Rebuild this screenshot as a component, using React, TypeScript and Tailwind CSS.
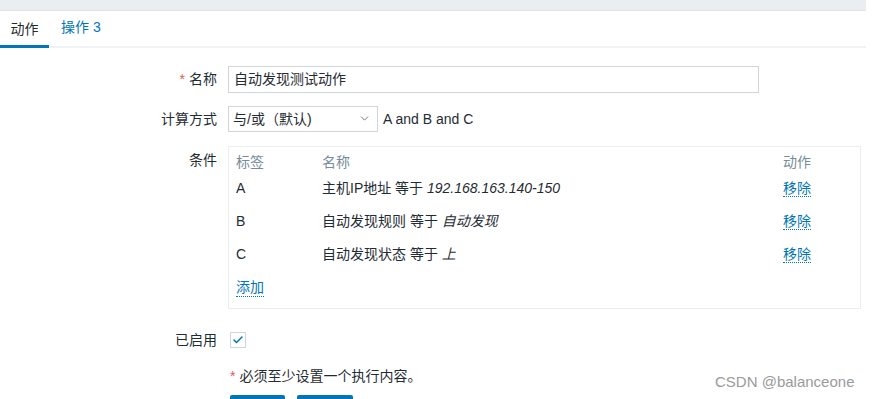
import { Check, ChevronDown } from 'lucide-react';

const font = { fontFamily: '"Liberation Sans", "Noto Sans CJK SC", Arial, sans-serif' };

interface Cond {
  label: string;
  name: string;
  value: string;
}

const conditions: Cond[] = [
  { label: 'A', name: '主机IP地址 等于 ', value: '192.168.163.140-150' },
  { label: 'B', name: '自动发现规则 等于 ', value: '自动发现' },
  { label: 'C', name: '自动发现状态 等于 ', value: '上' },
];

function Label({ children, required }: { children: React.ReactNode; required?: boolean }) {
  return (
    <div className="w-[217px] shrink-0 text-right text-[#1f2c33]">
      {required && <span className="text-[#e45959] mr-1">*</span>}
      {children}
    </div>
  );
}

export default function App() {
  return (
    <div className="w-[873px] h-[399px] bg-white overflow-hidden relative text-[14px] leading-[18px] text-[#1f2c33]" style={font}>
      <div className="h-[11px] w-[866px] bg-[#ebeef0] border-b border-[#dfe4e7]" />

      <div className="w-[866px] flex h-[37px] border-b-2 border-[#f0f2f3] items-end">
        <div className="w-[49px] h-full flex items-center justify-center border-b-[3px] border-[#0275b8] -mb-[2px] text-[#1f2c33]">
          动作
        </div>
        <div className="h-full flex items-center pl-[12px] text-[#0275b8] pb-[3px]">操作 3</div>
      </div>

      <div className="flex items-center mt-[17px] h-[28px]">
        <Label required>名称</Label>
        <div className="ml-[11px] w-[531px] h-[27px] border border-[#cfd6da] flex items-center px-[5px]">
          自动发现测试动作
        </div>
      </div>

      <div className="flex items-center mt-[12px] h-[27px]">
        <Label>计算方式</Label>
        <div className="ml-[11px] w-[150px] h-[26px] border border-[#cfd6da] flex items-center pl-[4px] pr-[6px] justify-between">
          <span>与/或（默认)</span>
          <ChevronDown size={13} strokeWidth={1.5} className="text-[#555]" />
        </div>
        <span className="ml-[5px]">A and B and C</span>
      </div>

      <div className="flex mt-[14px]">
        <div className="pt-[5px]">
          <Label>条件</Label>
        </div>
        <div className="ml-[11px] w-[633px] h-[163px] border border-[#ebeef0] px-[7px] pt-[5px]">
          <div className="flex h-[19px] items-center text-[#768d99]">
            <div className="w-[86px]">标签</div>
            <div className="flex-1">名称</div>
            <div className="w-[70px]">动作</div>
          </div>
          {conditions.map(c => (
            <div key={c.label} className="flex h-[33px] items-center pt-[1px]">
              <div className="w-[86px]">{c.label}</div>
              <div className="flex-1">
                {c.name}
                <i>{c.value}</i>
              </div>
              <div className="w-[70px]">
                <span className="text-[#0275b8] border-b border-dotted border-[#0275b8]">移除</span>
              </div>
            </div>
          ))}
          <div className="h-[32px] flex items-center pt-[3px]">
            <span className="text-[#0275b8] border-b border-dotted border-[#0275b8]">添加</span>
          </div>
        </div>
      </div>

      <div className="flex items-center mt-[22px] h-[18px]">
        <Label>已启用</Label>
        <div className="ml-[13px] w-[16px] h-[16px] border border-[#cfd6da] flex items-center justify-center">
          <Check size={12} strokeWidth={3} className="text-[#0275b8]" />
        </div>
      </div>

      <div className="ml-[230px] mt-[18px]">
        <span className="text-[#e45959] mr-1">*</span>必须至少设置一个执行内容。
      </div>

      <div className="flex ml-[230px] mt-[10px] gap-[12px]">
        <div className="w-[55px] h-[20px] bg-[#0275b8] rounded-[2px]" />
        <div className="w-[56px] h-[20px] bg-[#0275b8] rounded-[2px]" />
      </div>

      <div className="absolute left-[715px] top-[373px] text-[15px] text-[#9a9a9a]" style={{ fontFamily: '"Liberation Sans", Arial, sans-serif' }}>
        CSDN @balanceone
      </div>
    </div>
  );
}
